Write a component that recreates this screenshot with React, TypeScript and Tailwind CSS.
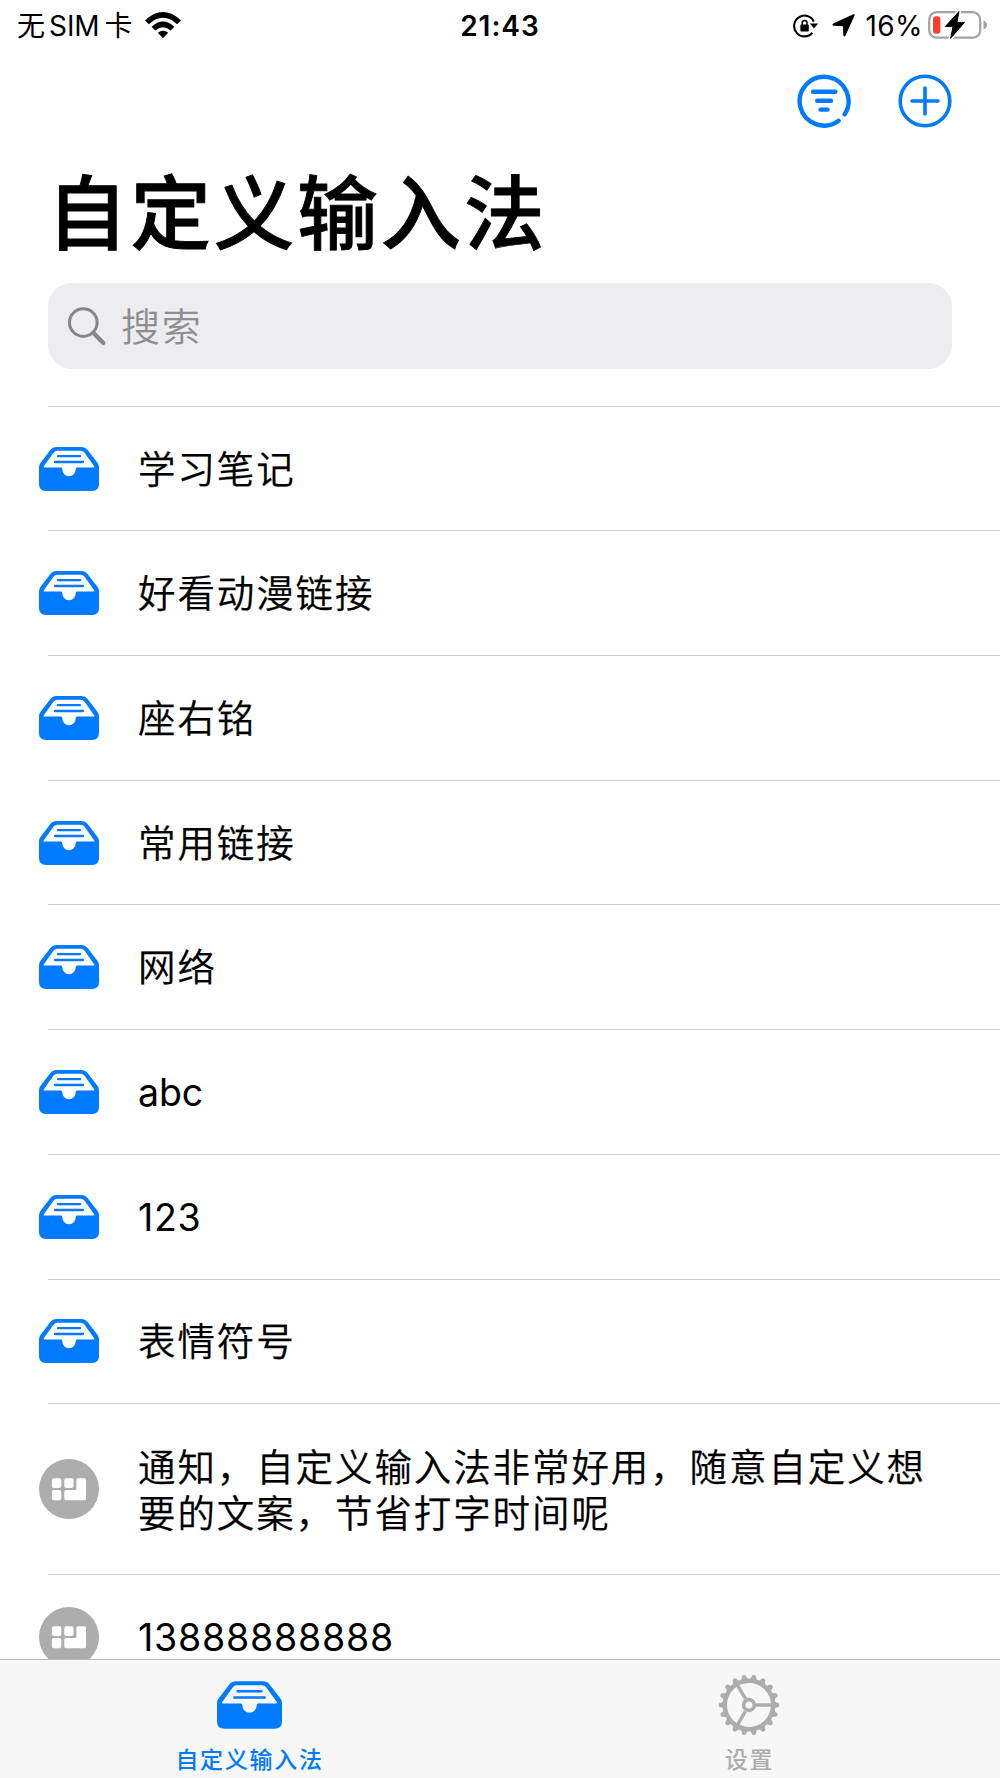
const FONT = "font-['Inter','Noto_Sans_CJK_SC',sans-serif]";

const ROWS = [
  { type: "folder", label: "学习笔记" },
  { type: "folder", label: "好看动漫链接" },
  { type: "folder", label: "座右铭" },
  { type: "folder", label: "常用链接" },
  { type: "folder", label: "网络" },
  { type: "folder", label: "abc", tracking: "tracking-[-0.1px]" },
  { type: "folder", label: "123", tracking: "tracking-[0.75px]" },
  { type: "folder", label: "表情符号" },
  { type: "phrase", label: "通知，自定义输入法非常好用，随意自定义想要的文案，节省打字时间呢", tall: true },
  { type: "phrase", label: "13888888888", tracking: "tracking-[0.8px]" },
];

const TEETH = Array.from({ length: 18 }, (_, i) => i * 20);

function TrayIcon({ className }: { className: string }) {
  return (
    <svg viewBox="0 0 60 44" className={className}>
      <path
        fill="#007aff"
        fillRule="evenodd"
        d="M17.5 0H42.5Q46.3 0 48.6 3L58.4 15.8Q60 17.8 60 20.5V37Q60 44 53 44H7Q0 44 0 37V20.5Q0 17.8 1.6 15.8L11.4 3Q13.7 0 17.5 0ZM18.2 3.8Q16 3.8 14.6 5.6L4.7 19.4Q4.2 20.6 5.4 20.6H22Q23.3 20.6 23.3 22.2A6.7 7 0 0 0 36.7 22.2Q36.7 20.6 38 20.6H54.6Q55.8 20.6 55.3 19.4L45.4 5.6Q44 3.8 41.8 3.8Z"
      />
      <path d="M19 9.2H41M16 15H44" stroke="#007aff" strokeWidth="2.3" strokeLinecap="round" />
    </svg>
  );
}

function PhraseIcon() {
  return (
    <svg viewBox="0 0 60 60" className="h-[60px] w-[60px] shrink-0">
      <circle cx="30" cy="30" r="30" fill="#adadad" />
      <g fill="#fff">
        <rect x="12.9" y="19.3" width="9.4" height="9.8" rx="1.8" />
        <rect x="12.9" y="31" width="9.4" height="10.2" rx="1.8" />
        <rect x="25.3" y="19.3" width="9.2" height="9.8" rx="1.8" />
        <path d="M39.2 19.3H45.2Q47 19.3 47 21.1V39.4Q47 41.2 45.2 41.2H27.1Q25.3 41.2 25.3 39.4V32.7Q25.3 31 27.1 31H35.8Q37.4 31 37.4 29.4V21.1Q37.4 19.3 39.2 19.3Z" />
      </g>
    </svg>
  );
}

function GearIcon() {
  return (
    <svg viewBox="-31 -31 62 62" className="h-[62px] w-[62px]" fill="none" stroke="#adadad">
      <circle r="24.2" strokeWidth="4.4" />
      <circle r="5.4" strokeWidth="3.6" />
      <path d="M7 0H23M-3.5 -6.1L-11.5 -19.9M-3.5 6.1L-11.5 19.9" strokeWidth="3.4" />
      {TEETH.map((a) => (
        <path key={a} d="M25 -3.6L29.8 -1.7Q31 0 29.8 1.7L25 3.6Z" fill="#adadad" stroke="none" transform={`rotate(${a})`} />
      ))}
    </svg>
  );
}

function StatusBar() {
  return (
    <div className="grid h-[51px] grid-cols-3 items-center pl-[17px] pr-[12px] text-[28px] text-black">
      <div className="flex items-center">
        <span>无</span>
        <span className="ml-[4px] tracking-[-0.1px]">SIM</span>
        <span className="ml-[5px]">卡</span>
        <svg viewBox="0 0 36 27" className="ml-[12px] h-[27px] w-[36px]">
          <path d="M0 8.4Q18 -8.4 36 8.4L32.1 12.3Q18 -0.6 3.9 12.3Z" />
          <path d="M6.6 14.8Q18 4.4 29.4 14.8L25.6 18.6Q18 12 10.4 18.6Z" />
          <path d="M12.8 20.8Q18 16.8 23.2 20.8L18 26.2Z" />
        </svg>
      </div>
      <div className="pr-[5px] text-center font-semibold tracking-[1px]">21:43</div>
      <div className="flex items-center justify-end">
        <svg viewBox="0 0 26 24" className="h-[24px] w-[26px]" fill="none" stroke="#000">
          <path d="M20.9 7.5A10.4 10.4 0 1 0 19.4 18.8" strokeWidth="2.1" />
          <path d="M16.9 9.6H25.2L21 14.6Z" fill="#000" stroke="none" />
          <rect x="7.4" y="10.6" width="8.4" height="7" rx="0.8" fill="#000" stroke="none" />
          <path d="M9.2 11V8.8Q9.2 6.5 11.6 6.5Q14 6.5 14 8.8V11" strokeWidth="1.5" />
        </svg>
        <svg viewBox="0 0 23 23" className="ml-[13px] h-[23px] w-[23px]">
          <path d="M21.4 0.2Q23 0 22.6 1.6L13.5 21.5Q11.8 23.6 11.3 21L11 12.2L2 11.8Q-0.8 11.2 1.2 9.4Z" />
        </svg>
        <span className="ml-[11px] tracking-[0.4px]">16%</span>
        <svg viewBox="0 0 60 30" className="mb-[2px] ml-[5px] h-[30px] w-[60px]">
          <rect x="1.2" y="2.2" width="51" height="25.5" rx="7.5" fill="none" stroke="#a2a2a4" strokeWidth="2.2" />
          <path d="M55.5 10.5Q59 12 59 15T55.5 19.5Z" fill="#a2a2a4" />
          <rect x="5" y="6.2" width="7.4" height="17.6" rx="3" fill="#ff3b30" />
          <path d="M31 1.5L17.3 16.6H25L22.5 28.5L36.5 12.4H29Z" fill="#000" stroke="#fff" strokeWidth="4" paintOrder="stroke" />
          <path d="M31 1.5L17.3 16.6H25L22.5 28.5L36.5 12.4H29Z" fill="#000" stroke="#000" strokeWidth="0.8" strokeLinejoin="round" />
        </svg>
      </div>
    </div>
  );
}

function Toolbar() {
  return (
    <div className="flex h-[103px] justify-end gap-[47.5px] pr-[48px] pt-[23px]">
      <svg viewBox="-27 -27 54 54" className="h-[54px] w-[54px]" fill="none" stroke="#007aff" strokeLinecap="round">
        <path d="M14.6 19.8A24.4 24.4 0 1 1 20.6 13.4" strokeWidth="4.4" />
        <path d="M-11 -9.2H11.4M-6.8 -0.3H7M-3.4 8.6H3.6" strokeWidth="4.4" />
      </svg>
      <svg viewBox="-27 -27 54 54" className="h-[54px] w-[54px]" fill="none" stroke="#007aff" strokeLinecap="round">
        <circle r="24.8" strokeWidth="3.6" />
        <path d="M-13 0H13M0 -13V13" strokeWidth="3.6" />
      </svg>
    </div>
  );
}

function SearchBox() {
  return (
    <div className="mx-12 flex h-[86px] items-center rounded-[24px] bg-[#ededef] pl-[19px]">
      <svg viewBox="0 0 40 40" className="h-[40px] w-[40px]" fill="none" stroke="#868689">
        <circle cx="16.3" cy="16.5" r="13.8" strokeWidth="3" />
        <path d="M26.5 27L36.3 37" strokeWidth="4.2" strokeLinecap="round" />
      </svg>
      <span className="ml-[14px] pt-[2px] text-[39px] font-[350] tracking-[1.8px] text-[#8e8e92]">搜索</span>
    </div>
  );
}

function Row({ row }: { row: (typeof ROWS)[number] }) {
  return (
    <div className={`flex shrink-0 items-center pl-[39px] pt-px ${row.tall ? "h-[170.5px]" : "h-[124.7px]"}`}>
      {row.type === "folder" ? <TrayIcon className="h-[44px] w-[60px] shrink-0" /> : <PhraseIcon />}
      <div
        className={`ml-[39px] w-[795px] text-[37.5px] leading-[46px] text-black ${row.tall ? "pb-px" : row.tracking ? "pt-[3px]" : "pb-[4px]"} ${
          row.tracking ?? "font-['Noto_Sans_CJK_SC',sans-serif] font-[350] tracking-[1.9px] [-webkit-text-stroke:0.25px_#000]"
        }`}
      >
        {row.label}
      </div>
    </div>
  );
}

export default function App() {
  return (
    <div lang="zh-CN" className={`flex h-[1778px] w-[1000px] flex-col overflow-hidden bg-white ${FONT}`}>
      <StatusBar />
      <Toolbar />
      <h1 className="h-[129px] pl-[47px] text-[80.5px] font-medium leading-[119px] tracking-[2.9px] text-black [-webkit-text-stroke:0.9px_#000]">
        自定义输入法
      </h1>
      <SearchBox />
      <div className="mt-[36.7px] flex min-h-0 flex-1 flex-col overflow-hidden">
        {ROWS.map((row) => (
          <div key={row.label} className="shrink-0">
            <div className="-mb-px ml-12 h-px bg-[#cfcfd1]" />
            <Row row={row} />
          </div>
        ))}
      </div>
      <div className="grid h-[119px] shrink-0 grid-cols-2 border-t border-[#b8b8b9] bg-[#f7f7f7] text-[23px] font-medium leading-[34px] tracking-[1.7px]">
        <div className="flex flex-col items-center pr-[2px] pt-[21px]">
          <TrayIcon className="h-[48px] w-[65px]" />
          <span className="mt-[14px] pl-px text-[#007aff]">自定义输入法</span>
        </div>
        <div className="flex flex-col items-center pr-[2px] pt-[14px]">
          <GearIcon />
          <span className="mt-[7px] pl-px text-[#adadad]">设置</span>
        </div>
      </div>
    </div>
  );
}
